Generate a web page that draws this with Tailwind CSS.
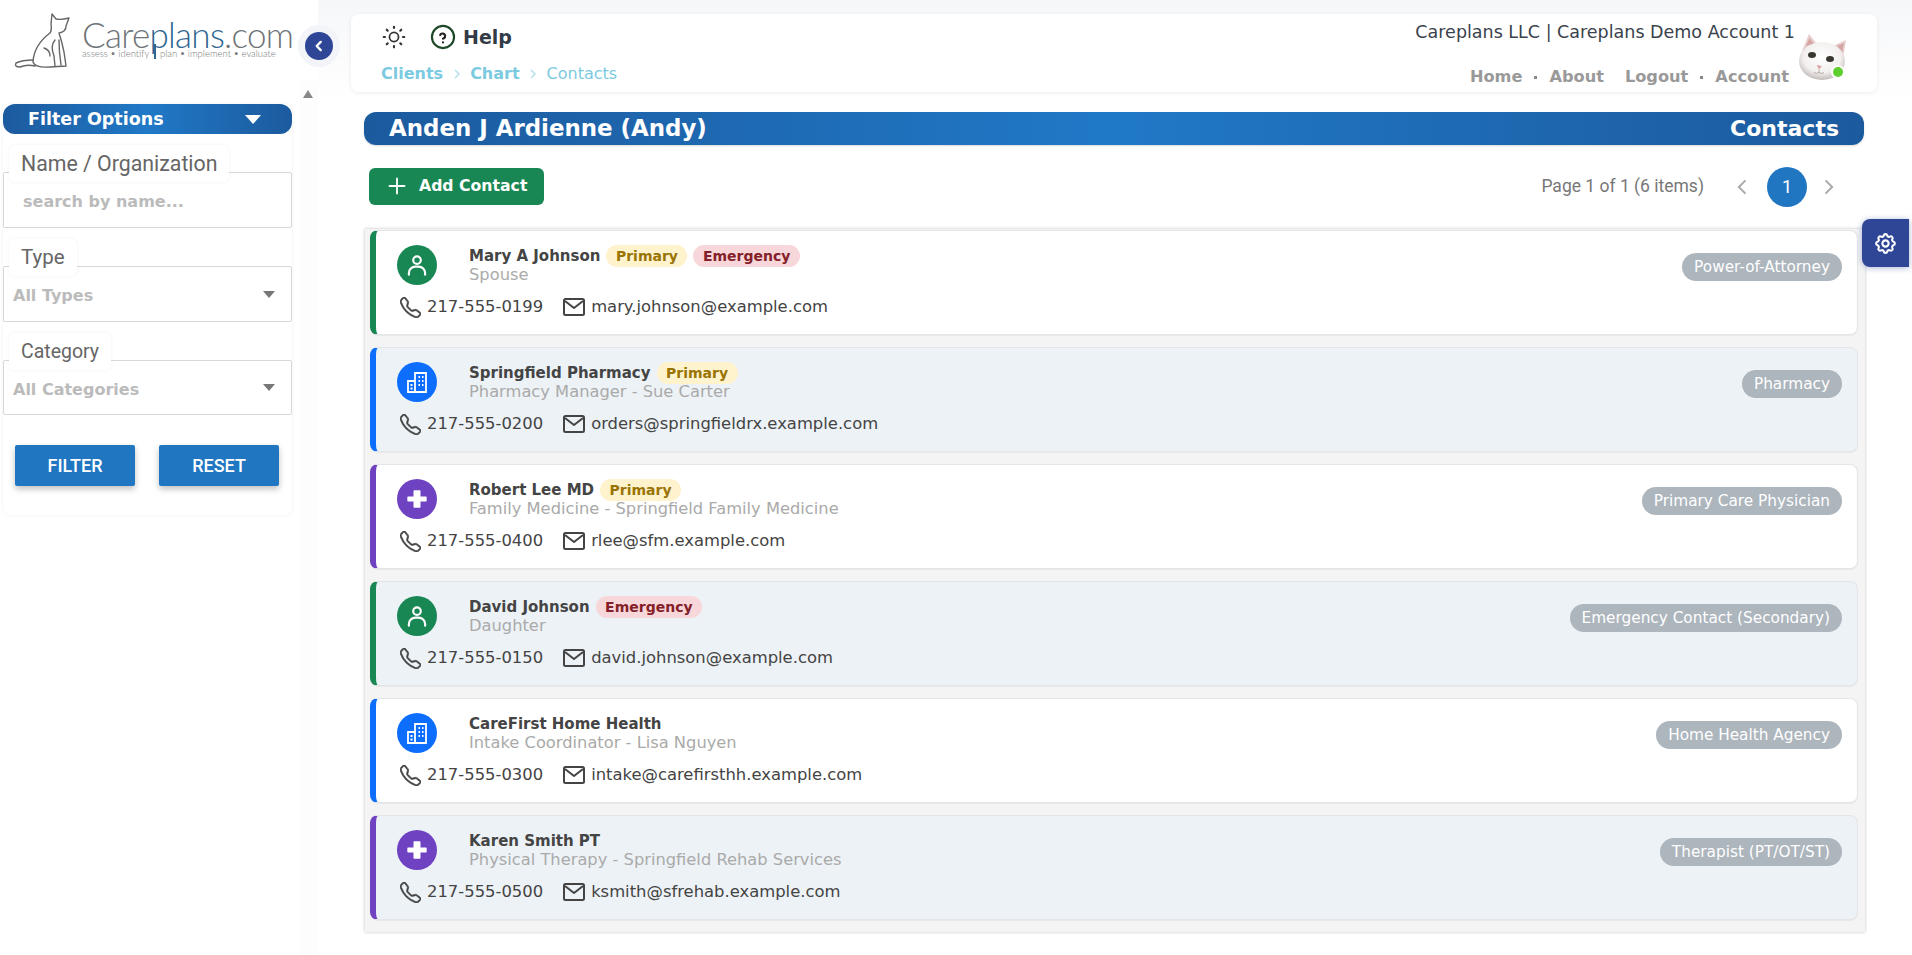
<!DOCTYPE html>
<html lang="en">
<head>
<meta charset="utf-8">
<title>Contacts</title>
<script src="https://cdn.jsdelivr.net/npm/@tailwindcss/browser@4"></script>
</head>
<body class="font-['DejaVu_Sans',sans-serif] bg-white text-[#444]">
<div class="flex h-[955px] w-[1912px] overflow-hidden">

  <!-- sidebar -->
  <aside class="w-[318px] shrink-0 relative bg-white">
    <div class="absolute right-0 top-[80px] bottom-0 w-[18px] bg-[#fdfdfd]"></div>
    <div class="h-[94px] relative">
      <svg class="absolute left-[12px] top-[12px]" width="60" height="60" viewBox="12 12 60 60" fill="none" stroke="#666" stroke-width="1.4" stroke-linejoin="round" stroke-linecap="round">
        <path d="M52 14 L56 19 Q61 20 69 18 L66 26 Q66 32 59 33 Q62 42 64 52 L66 66 L50 67 Q35 68 33 62 Q34 45 50 33 Q52 30 51 24 Z"/>
        <path d="M33 60 Q22 60 16 63 Q14 67 20 67 Q27 64 35 66"/>
        <path d="M55 40 Q50 46 54 56 L55 66 M44 48 Q50 50 50 56 M59 40 Q59 52 61 65"/>
      </svg>
      <div class="absolute left-[82px] top-[19px] font-['Lato',sans-serif] font-light text-[35px] leading-[30px] tracking-[-0.7px] text-[#6f7478] whitespace-nowrap">Care<span class="text-[#2f6590]">plans</span>.com</div>
      <div class="absolute left-[154px] top-[44px] w-[2px] h-[15px] bg-[#2f6590]"></div>
      <div class="absolute left-[82px] top-[49px] font-['Lato',sans-serif] font-light text-[9.5px] leading-[10px] text-[#777] whitespace-nowrap">assess &bull; identify</div>
      <div class="absolute left-[160px] top-[49px] font-['Lato',sans-serif] font-light text-[9.5px] leading-[10px] text-[#777] whitespace-nowrap">plan &bull; implement &bull; evaluate</div>
      <div class="absolute left-[298px] top-[25px] w-[42px] h-[42px] rounded-full bg-[#f3f4f8] flex items-center justify-center z-10">
        <div class="w-[28px] h-[28px] rounded-full bg-[#2f4696] flex items-center justify-center">
          <svg width="14" height="14" viewBox="0 0 24 24" fill="none" stroke="#fff" stroke-width="4" stroke-linecap="round" stroke-linejoin="round"><path d="M15 5l-7 7 7 7"/></svg>
        </div>
      </div>
      <div class="absolute left-[303px] top-[90px] w-0 h-0 border-x-[5px] border-x-transparent border-b-[8px] border-b-[#888]"></div>
    </div>

    <div class="relative mt-[10px] ml-[3px] w-[289px] h-[411px] rounded-lg bg-white shadow-[0_0_4px_rgba(0,0,0,0.06)]">
      <div class="h-[30px] rounded-[12px] bg-gradient-to-r from-[#1c5a9e] via-[#2079c7] to-[#1c5a9e] flex items-center justify-between pl-[25px] pr-[31px] pt-[1px] text-white font-bold text-[17.5px]">
        <span>Filter Options</span>
        <span class="w-0 h-0 border-x-[8px] border-x-transparent border-t-[9px] border-t-white"></span>
      </div>

      <div class="relative mt-[38px] h-[56px] border border-[#d8d8d8] rounded-[2px] flex items-center pl-[19px]">
        <span class="absolute left-[5px] top-[-28px] h-[37px] px-[12px] flex items-center bg-white rounded-md shadow-[0_0_4px_rgba(0,0,0,0.05)] font-['Roboto',sans-serif] text-[21.3px] text-[#666] whitespace-nowrap">Name / Organization</span>
        <span class="font-bold text-[16px] text-[#bbb] relative top-[2px]">search by name...</span>
      </div>

      <div class="relative mt-[38px] h-[56px] border border-[#d8d8d8] rounded-[2px] flex items-center justify-between pl-[9px] pr-[16px]">
        <span class="absolute left-[5px] top-[-28px] h-[37px] px-[12px] flex items-center bg-white rounded-md shadow-[0_0_4px_rgba(0,0,0,0.05)] font-['Roboto',sans-serif] text-[20.5px] text-[#666]">Type</span>
        <span class="font-bold text-[16px] text-[#bbb] relative top-[2px]">All Types</span>
        <span class="w-0 h-0 border-x-[6px] border-x-transparent border-t-[7px] border-t-[#777]"></span>
      </div>

      <div class="relative mt-[38px] h-[55px] border border-[#d8d8d8] rounded-[2px] flex items-center justify-between pl-[9px] pr-[16px]">
        <span class="absolute left-[5px] top-[-28px] h-[37px] px-[12px] flex items-center bg-white rounded-md shadow-[0_0_4px_rgba(0,0,0,0.05)] font-['Roboto',sans-serif] text-[19.5px] text-[#666]">Category</span>
        <span class="font-bold text-[16px] text-[#bbb] relative top-[2px]">All Categories</span>
        <span class="w-0 h-0 border-x-[6px] border-x-transparent border-t-[7px] border-t-[#777]"></span>
      </div>

      <div class="mt-[30px] pl-[12px] flex gap-[24px]">
        <button class="w-[120px] h-[41px] rounded-[2px] bg-[#2176c1] text-white font-['Roboto',sans-serif] font-medium text-[18px] shadow-[0_3px_6px_rgba(0,0,0,0.25)]">FILTER</button>
        <button class="w-[120px] h-[41px] rounded-[2px] bg-[#2176c1] text-white font-['Roboto',sans-serif] font-medium text-[18px] shadow-[0_3px_6px_rgba(0,0,0,0.25)]">RESET</button>
      </div>
    </div>
  </aside>

  <!-- main -->
  <main class="flex-1 bg-[linear-gradient(#f6f7f9,#fff_100px)] relative">
    <div class="ml-[33px] mt-[14px] w-[1526px] h-[78px] bg-white rounded-lg shadow-[0_1px_5px_rgba(0,0,0,0.07)] flex justify-between">
      <div class="pl-[30px] pt-[9px]">
        <div class="flex items-center h-[28px]">
          <svg width="26" height="26" viewBox="0 0 24 24" fill="none" stroke="#333" stroke-width="2" stroke-linecap="round"><circle cx="12" cy="12" r="4.2" stroke-width="1.6"/><path d="M12 2.5v1.2M12 20.3v1.2M2.5 12h1.2M20.3 12h1.2M5.3 5.3l.9.9M17.8 17.8l.9.9M5.3 18.7l.9-.9M17.8 6.2l.9-.9"/></svg>
          <svg class="ml-[23px]" width="26" height="26" viewBox="0 0 24 24" fill="none" stroke="#1f4a2a" stroke-width="2" stroke-linecap="round"><circle cx="12" cy="12" r="10.2"/><path stroke="#222" d="M12 17v.01M12 13.5a2.4 2.4 0 1 0-2.6-3.4"/></svg>
          <span class="ml-[7px] font-bold text-[19px] text-[#333b46]">Help</span>
        </div>
        <div class="flex items-center mt-[11px] text-[16px] text-[#7ccae0]">
          <span class="font-bold">Clients</span>
          <svg class="mx-[7.5px]" width="12" height="12" viewBox="0 0 24 24" fill="none" stroke="#b5e0ec" stroke-width="3"><path d="M8 4l8 8-8 8"/></svg>
          <span class="font-bold">Chart</span>
          <svg class="mx-[7.5px]" width="12" height="12" viewBox="0 0 24 24" fill="none" stroke="#b5e0ec" stroke-width="3"><path d="M8 4l8 8-8 8"/></svg>
          <span>Contacts</span>
        </div>
      </div>
      <div class="flex pr-[29px]">
        <div class="flex flex-col items-end pt-[7px]">
          <div class="text-[17.5px] text-[#3a424c] leading-[22px]">Careplans LLC | Careplans Demo Account 1</div>
          <div class="flex items-center font-bold text-[16.2px] text-[#999] mt-[22px] mr-[6px]">
            <span>Home</span><span class="mx-[12px] w-[3px] h-[3px] bg-[#888]"></span><span>About</span>
            <span class="ml-[21px]">Logout</span><span class="mx-[12px] w-[3px] h-[3px] bg-[#888]"></span><span>Account</span>
          </div>
        </div>
        <!-- user picture -->
        <svg class="ml-[3px] mt-[17px]" width="50" height="50" viewBox="0 0 50 50">
          <defs><radialGradient id="fur" cx="50%" cy="40%" r="62%"><stop offset="0%" stop-color="#fff"/><stop offset="65%" stop-color="#f3f0ef"/><stop offset="100%" stop-color="#bdb7b4"/></radialGradient></defs>
          <path d="M4 20 L11 3 L19 13Z" fill="#e6cfcd"/><path d="M8 15 L11.5 7 L16 13Z" fill="#d6a5a4"/>
          <path d="M35 15 L48 9 L45 27Z" fill="#e6cfcd"/><path d="M39 15 L46 12 L44 22Z" fill="#d6a5a4"/>
          <ellipse cx="24" cy="30" rx="23" ry="19" fill="url(#fur)"/>
          <ellipse cx="14" cy="24" rx="4" ry="3" fill="#3a3630"/><ellipse cx="32" cy="28" rx="4" ry="3" fill="#3a3630"/>
          <path d="M18.5 34 L24 35 L21 38.5Z" fill="#dba6a6"/>
          <path d="M21 38.5 v3 M21 41.5 q-3 2 -5 0 M21 41.5 q3 2 5 0" stroke="#a99a97" stroke-width=".8" fill="none"/>
          <circle cx="40" cy="41" r="7" fill="#fff"/><circle cx="40" cy="41" r="5" fill="#5fcf2f"/>
        </svg>
      </div>
    </div>

    <div class="ml-[46px] mt-[20px] w-[1500px] h-[33px] rounded-[12px] bg-gradient-to-r from-[#1c5a9e] via-[#2079c7] to-[#1c5a9e] flex items-center justify-between pl-[25px] pr-[25px] text-white font-bold shadow-[0_1px_2px_rgba(0,0,0,0.15)]">
      <span class="text-[22.9px]">Anden J Ardienne (Andy)</span><span class="text-[22px]">Contacts</span>
    </div>

    <div class="ml-[51px] mt-[23px] w-[1469px] h-[37px] flex items-center justify-between">
      <button class="w-[175px] h-[37px] rounded-md bg-[#198754] text-white font-bold text-[15.7px] flex items-center pl-[18px] pb-[1px]">
        <svg width="20" height="20" viewBox="0 0 24 24" fill="none" stroke="#fff" stroke-width="2.2" stroke-linecap="round"><path d="M12 3v18M3 12h18"/></svg>
        <span class="ml-[12px]">Add Contact</span>
      </button>
      <div class="flex items-center">
        <span class="font-['Roboto',sans-serif] text-[17.5px] text-[#777]">Page 1 of 1 (6 items)</span>
        <svg class="ml-[29px]" width="20" height="20" viewBox="0 0 24 24" fill="none" stroke="#aaa" stroke-width="2.4"><path d="M15 4l-8 8 8 8"/></svg>
        <span class="ml-[14px] w-[40px] h-[40px] rounded-full bg-[#2176c1] text-white font-['Roboto',sans-serif] text-[18px] flex items-center justify-center">1</span>
        <svg class="ml-[11px]" width="20" height="20" viewBox="0 0 24 24" fill="none" stroke="#aaa" stroke-width="2.4"><path d="M9 4l8 8-8 8"/></svg>
      </div>
    </div>

    <div id="lista" class="ml-[47px] mt-[24px] w-[1500px] h-[703px] bg-[#f4f4f4] shadow-[0_0_3px_rgba(0,0,0,0.25)] pl-[5px] pr-[7px] pt-[1px] flex flex-col gap-[12px]"></div>

    <div class="absolute right-[3px] top-[219px] w-[47px] h-[48px] rounded-l-lg bg-[#2f4696] shadow-[0_1px_6px_rgba(47,70,150,0.4)] flex items-center justify-center">
      <svg width="25" height="25" viewBox="0 0 24 24" fill="none" stroke="#fff" stroke-width="2" stroke-linecap="round" stroke-linejoin="round"><path d="M10.325 4.317c.426 -1.756 2.924 -1.756 3.35 0a1.724 1.724 0 0 0 2.573 1.066c1.543 -.94 3.31 .826 2.37 2.37a1.724 1.724 0 0 0 1.065 2.572c1.756 .426 1.756 2.924 0 3.35a1.724 1.724 0 0 0 -1.066 2.573c.94 1.543 -.826 3.31 -2.37 2.37a1.724 1.724 0 0 0 -2.572 1.065c-.426 1.756 -2.924 1.756 -3.35 0a1.724 1.724 0 0 0 -2.573 -1.066c-1.543 .94 -3.31 -.826 -2.37 -2.37a1.724 1.724 0 0 0 -1.065 -2.572c-1.756 -.426 -1.756 -2.924 0 -3.35a1.724 1.724 0 0 0 1.066 -2.573c-.94 -1.543 .826 -3.31 2.37 -2.37c1 .608 2.296 .07 2.572 -1.065z"/><circle cx="12" cy="12" r="3"/></svg>
    </div>
  </main>
</div>

<script>
// icons by contact kind
const icones = {
  pessoa: '<svg width="26" height="26" viewBox="0 0 24 24" fill="none" stroke="#fff" stroke-width="2" stroke-linecap="round"><circle cx="12" cy="7.5" r="3.5"/><path d="M4.5 21v-1.5a6 6 0 0 1 6-6h3a6 6 0 0 1 6 6V21"/></svg>',
  empresa: '<svg width="24" height="24" viewBox="0 0 24 24" fill="none" stroke="#fff" stroke-width="1.8"><path d="M10 11V3h11v19H3V11h7v11"/><path stroke-width="2" d="M13.5 7h1.5M17 7h1.5M13.5 11h1.5M17 11h1.5M13.5 15h1.5M17 15h1.5M5.5 15h2M5.5 18.5h2"/></svg>',
  medico: '<svg width="26" height="26" viewBox="0 0 24 24" fill="#fff"><path d="M9 2.5h6a.8.8 0 0 1 .8.8v5.9h5.9a.8.8 0 0 1 .8.8v4a.8.8 0 0 1-.8.8h-5.900v5.900a.8.8 0 0 1-.8.8H9a.8.8 0 0 1-.8-.8v-5.900H2.300a.8.8 0 0 1-.8-.8V10a.8.8 0 0 1 .8-.8h5.900V3.300a.8.8 0 0 1 .8-.8z" transform="translate(1.8 1.8) scale(.85)"/></svg>'
};
const tema = {
  pessoa: { barra: 'border-l-[#198754]', fundo: 'bg-[#198754]' },
  empresa: { barra: 'border-l-[#0d6efd]', fundo: 'bg-[#0d6efd]' },
  medico: { barra: 'border-l-[#6f42c1]', fundo: 'bg-[#6f42c1]' }
};

const contatos = [
  { tipo: 'pessoa', nome: 'Mary A Johnson', primary: true, emergency: true, sub: 'Spouse', fone: '217-555-0199', email: 'mary.johnson@example.com', tag: 'Power-of-Attorney' },
  { tipo: 'empresa', nome: 'Springfield Pharmacy', primary: true, sub: 'Pharmacy Manager - Sue Carter', fone: '217-555-0200', email: 'orders@springfieldrx.example.com', tag: 'Pharmacy' },
  { tipo: 'medico', nome: 'Robert Lee MD', primary: true, sub: 'Family Medicine - Springfield Family Medicine', fone: '217-555-0400', email: 'rlee@sfm.example.com', tag: 'Primary Care Physician' },
  { tipo: 'pessoa', nome: 'David Johnson', emergency: true, sub: 'Daughter', fone: '217-555-0150', email: 'david.johnson@example.com', tag: 'Emergency Contact (Secondary)' },
  { tipo: 'empresa', nome: 'CareFirst Home Health', sub: 'Intake Coordinator - Lisa Nguyen', fone: '217-555-0300', email: 'intake@carefirsthh.example.com', tag: 'Home Health Agency' },
  { tipo: 'medico', nome: 'Karen Smith PT', sub: 'Physical Therapy - Springfield Rehab Services', fone: '217-555-0500', email: 'ksmith@sfrehab.example.com', tag: 'Therapist (PT/OT/ST)' }
];

const fone = '<svg width="21" height="21" viewBox="0 0 16 16" fill="#444" stroke="#444" stroke-width=".45"><path d="M3.654 1.328a.678.678 0 0 0-1.015-.063L1.605 2.3c-.483.484-.661 1.169-.45 1.77a17.568 17.568 0 0 0 4.168 6.608 17.569 17.569 0 0 0 6.608 4.168c.601.211 1.286.033 1.77-.45l1.034-1.034a.678.678 0 0 0-.063-1.015l-2.307-1.794a.678.678 0 0 0-.58-.122l-2.19.547a1.745 1.745 0 0 1-1.657-.459L5.482 8.062a1.745 1.745 0 0 1-.46-1.657l.548-2.19a.678.678 0 0 0-.122-.58L3.654 1.328zM1.884.511a1.745 1.745 0 0 1 2.612.163L6.29 2.98c.329.423.445.974.315 1.494l-.547 2.19a.678.678 0 0 0 .178.643l2.457 2.457a.678.678 0 0 0 .644.178l2.189-.547a1.745 1.745 0 0 1 1.494.315l2.306 1.794c.829.645.905 1.87.163 2.611l-1.034 1.034c-.74.74-1.846 1.065-2.877.702a18.634 18.634 0 0 1-7.01-4.42 18.634 18.634 0 0 1-4.42-7.009c-.362-1.03-.037-2.137.703-2.877L1.885.511z"/></svg>';
const carta = '<svg width="22" height="20" viewBox="0 0 22 20" fill="none" stroke="#444" stroke-width="2" stroke-linejoin="round"><rect x="1" y="2" width="20" height="16" rx="1.5"/><path d="M2 4l9 7 9-7"/></svg>';

let html = '';
contatos.forEach((c, i) => {
  const t = tema[c.tipo];
  const fundoCard = i % 2 ? 'bg-[#edf2f6]' : 'bg-white';
  html += `
  <div class="h-[105px] shrink-0 ${fundoCard} rounded-lg border border-[#e3e5e8] border-l-[6px] ${t.barra} flex justify-between shadow-[0_1px_1px_rgba(0,0,0,0.05)]">
    <div class="pl-[21px] pt-[14px]">
      <div class="flex">
        <div class="w-[40px] h-[40px] rounded-full ${t.fundo} flex items-center justify-center">${icones[c.tipo]}</div>
        <div class="ml-[32px] leading-[18px]">
          <div class="flex items-center h-[22px]">
            <span class="font-bold text-[15px] text-[#444]">${c.nome}</span>
            ${c.primary ? '<span class="ml-[6px] h-[22px] px-[9.5px] rounded-full bg-[#fff3cd] text-[#997404] font-bold text-[14px] flex items-center">Primary</span>' : ''}
            ${c.emergency ? '<span class="ml-[6px] h-[22px] px-[9.5px] rounded-full bg-[#f8d7da] text-[#842029] font-bold text-[14px] flex items-center">Emergency</span>' : ''}
          </div>
          <div class="text-[16.3px] text-[#aaa] leading-[16px]">${c.sub}</div>
        </div>
      </div>
      <div class="flex items-center mt-[10px] text-[16.4px] text-[#444] ml-[3px]">
        ${fone}<span class="ml-[6px]">${c.fone}</span>
        <span class="ml-[20px] mr-[6px]">${carta}</span><span>${c.email}</span>
      </div>
    </div>
    <div class="pr-[15px] pt-[22px]">
      <span class="h-[28px] px-[12px] rounded-full bg-[#adb5bd] text-white text-[15.3px] flex items-center whitespace-nowrap">${c.tag}</span>
    </div>
  </div>`;
});
document.getElementById('lista').innerHTML = html;
</script>
</body>
</html>
